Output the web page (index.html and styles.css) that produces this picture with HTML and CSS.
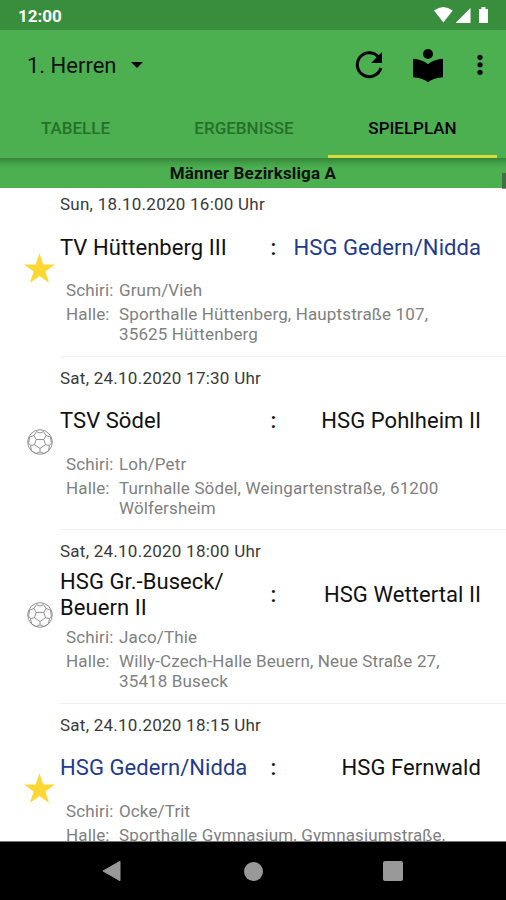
FILE: index.html
```html
<!DOCTYPE html>
<html lang="de">
<head>
<meta charset="utf-8">
<title>Spielplan</title>
<link rel="stylesheet" href="styles.css">
</head>
<body>
<svg class="defs" aria-hidden="true">
  <symbol id="star" viewBox="0 0 31 31"><path fill="#fdd835" d="M15.5 0 19.2 11.4H31L21.4 18.5 25.1 30 15.5 23 5.900 30 9.600 18.500 0 11.400H11.800Z"/></symbol>
  <symbol id="ball" viewBox="0 0 26 26"><g fill="none" stroke="#858585" stroke-width=".9"><circle cx="13" cy="13" r="12.300"/><path d="M9.200 10.500h7.600l1.700 5.200-5.500 3.800-5.500-3.800zM9.200 10.500 7 6.500 9.500 2.600M7 6.500 2.600 8M16.800 10.500 19 6.500 16.500 2.600M19 6.500l4.400 1.500M18.500 15.700l4 .8 2.300-3M22.500 16.500l-1 5.300M13 19.500v3.300l-4 1.700M13 22.800l4 1.700M7.500 15.700l-4 .8-2.300-3M3.500 16.500l1 5.300M9.500 2.600 13 4l3.500-1.400M2.600 8l-.9 5.500M23.400 8l.9 5.500M4.500 21.800 9 24.500M21.500 21.800 17 24.500"/></g></symbol>
</svg>
<div class="screen">
  <header class="statusbar">
    <span class="clock">12:00</span>
    <svg width="58" height="18" viewBox="0 0 58 18" fill="#fff"><path d="M1 4.500Q10.300-2.500 19.700 4.500L10.400 16.500Z"/><path d="M23 17V16.500L37.500 2V17Z"/><path d="M46 3h2.500V1h4v2H55v14h-9z"/></svg>
  </header>
  <div class="toolbar">
    <span class="team-select">1. Herren</span><i class="caret"></i>
    <svg class="refresh" width="28" height="28" viewBox="0 0 28 28"><path d="M23.100 5.500A12 12 0 1 0 25.800 17" fill="none" stroke="#000" stroke-width="3"/><path d="M27 1V12H16Z"/></svg>
    <svg class="reader" width="32" height="35" viewBox="0 0 32 35"><circle cx="16" cy="6" r="5"/><path d="M16 16.200C12.500 12.900 7 11 1 10.700V29.300C7 29.600 12.500 31.300 16 34.300 19.500 31.300 25 29.600 31 29.300V10.700C25 11 19.500 12.900 16 16.200Z"/></svg>
    <svg width="6" height="22" viewBox="0 0 6 22"><circle cx="3" cy="3.300" r="2.600"/><circle cx="3" cy="10.800" r="2.600"/><circle cx="3" cy="18.300" r="2.600"/></svg>
  </div>
  <nav class="tabs">
    <span class="tab">TABELLE</span><span class="tab">ERGEBNISSE</span><span class="tab active">SPIELPLAN</span>
  </nav>
  <div class="league">Männer Bezirksliga A<i class="scroll"></i></div>
  <main class="list">
    <article class="match">
      <svg class="mark"><use href="#star"/></svg>
      <div class="body">
        <div class="date">Sun, 18.10.2020 16:00 Uhr</div>
        <div class="teams"><span class="home">TV Hüttenberg III</span><b>:</b><span class="away own">HSG Gedern/Nidda</span></div>
        <div class="info"><span>Schiri:</span><span>Grum/Vieh</span><span>Halle:</span><span>Sporthalle Hüttenberg, Hauptstraße 107,<br>35625 Hüttenberg</span></div>
      </div>
    </article>
    <article class="match">
      <svg class="mark ball"><use href="#ball"/></svg>
      <div class="body">
        <div class="date">Sat, 24.10.2020 17:30 Uhr</div>
        <div class="teams"><span class="home">TSV Södel</span><b>:</b><span class="away">HSG Pohlheim II</span></div>
        <div class="info"><span>Schiri:</span><span>Loh/Petr</span><span>Halle:</span><span>Turnhalle Södel, Weingartenstraße, 61200<br>Wölfersheim</span></div>
      </div>
    </article>
    <article class="match">
      <svg class="mark ball"><use href="#ball"/></svg>
      <div class="body">
        <div class="date">Sat, 24.10.2020 18:00 Uhr</div>
        <div class="teams"><span class="home">HSG Gr.-Buseck/<br>Beuern II</span><b>:</b><span class="away">HSG Wettertal II</span></div>
        <div class="info"><span>Schiri:</span><span>Jaco/Thie</span><span>Halle:</span><span>Willy-Czech-Halle Beuern, Neue Straße 27,<br>35418 Buseck</span></div>
      </div>
    </article>
    <article class="match">
      <svg class="mark"><use href="#star"/></svg>
      <div class="body">
        <div class="date">Sat, 24.10.2020 18:15 Uhr</div>
        <div class="teams"><span class="home own">HSG Gedern/Nidda</span><b>:</b><span class="away">HSG Fernwald</span></div>
        <div class="info"><span>Schiri:</span><span>Ocke/Trit</span><span>Halle:</span><span>Sporthalle Gymnasium, Gymnasiumstraße,</span></div>
      </div>
    </article>
  </main>
  <footer class="navbar">
    <svg width="20" height="22" viewBox="0 0 20 22"><path d="M1 11 18 1.300V20.700Z" fill="#999" stroke="#999" stroke-linejoin="round"/></svg>
    <i class="circle"></i><i class="square"></i>
  </footer>
</div>
</body>
</html>
```
FILE: styles.css
```css
* { box-sizing: border-box; }
body { margin: 0; font-family: Roboto, sans-serif; color: #111; background: #fff; }
.defs { display: none; }
.screen { width: 506px; height: 900px; display: flex; flex-direction: column; overflow: hidden; }
.statusbar { height: 30px; flex: none; background: #388e3c; display: flex; align-items: center; justify-content: space-between; padding: 2px 15px 0 18px; color: #fff; }
.statusbar svg { margin-top: -3px; }
.clock { font-size: 17px; font-weight: 700; }
.toolbar { height: 70px; flex: none; background: #4caf50; display: flex; align-items: center; padding: 0 23px 0 27px; }
.team-select { font-size: 22px; width: 104px; white-space: nowrap; }
.caret { border: 6px solid transparent; border-top-color: #000; border-bottom: 0; }
.refresh { margin-left: auto; margin-right: 29px; }
.reader { margin-right: 33px; }
.tabs { height: 58px; flex: none; background: #4caf50; display: grid; grid-template-columns: 160px 168px 169px; }
.tab { display: flex; align-items: center; justify-content: center; font-size: 17px; font-weight: 500; color: #26702b; border-bottom: 3px solid transparent; }
.tab:first-child { padding-right: 9px; }
.tab.active { color: #000; border-color: #dbdc3b; }
.tab:first-child { padding-right: 0; padding-left: 0; margin-left: -9px; }
.league { position: relative; height: 30px; flex: none; background: linear-gradient(#358239, #43a047 5px, #4caf50 10px); display: flex; align-items: center; justify-content: center; font-size: 17px; font-weight: 700; letter-spacing: .15px; }
.scroll { position: absolute; right: 0; top: 15px; width: 4px; height: 16px; background: rgba(60,70,60,.6); }
.list { flex: 1; min-height: 0; overflow: hidden; margin-top: -4.700px; }
.match { height: 173.5px; display: flex; align-items: flex-start; padding-left: 24px; }
.mark { width: 31px; height: 31px; margin: 69.500px 5px 0 0; flex: none; }
.mark.ball { width: 26px; height: 26px; margin: 72px 7px 0 3px; }
.body { flex: 1; height: 173.5px; border-bottom: 1px solid #f0f0f0; }
.match:last-child .body { border: 0; }
.date { height: 34px; padding-top: 11px; font-size: 17px; line-height: 20px; letter-spacing: .25px; color: #3a3a3a; }
.teams { height: 61px; display: flex; align-items: center; padding-right: 25px; font-size: 22px; line-height: 26px; letter-spacing: .06px; }
.teams span { flex: 1; white-space: nowrap; }
.teams b { width: 10px; text-align: center; font-weight: 500; position: relative; left: 3px; }
.teams .away { text-align: right; }
.teams .own { color: #223a8e; }
.info { display: grid; grid-template-columns: 53px 1fr; row-gap: 4px; padding: 2px 0 0 6px; font-size: 17px; line-height: 20px; letter-spacing: .14px; color: #808080; white-space: nowrap; }
.navbar { height: 59px; flex: none; background: #000; border-top: 1px solid #777; display: flex; align-items: center; padding-left: 102px; }
.circle { width: 19px; height: 19px; border-radius: 50%; background: #999; margin: 0 120px 0 122px; }
.square { width: 20px; height: 20px; border-radius: 2px; background: #999; }
```
